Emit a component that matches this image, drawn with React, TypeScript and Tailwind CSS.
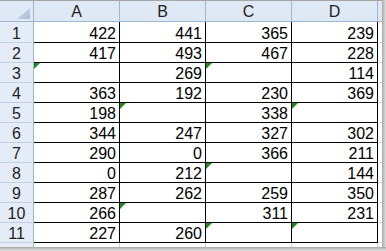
import React from "react";

type V = number | null;

const data: V[][] = [
  [422, 441, 365, 239],
  [417, 493, 467, 228],
  [null, 269, null, 114],
  [363, 192, 230, 369],
  [198, null, 338, null],
  [344, 247, 327, 302],
  [290, 0, 366, 211],
  [0, 212, null, 144],
  [287, 262, 259, 350],
  [266, null, 311, 231],
  [227, 260, null, null],
];

const cols = ["A", "B", "C", "D"];

function Flag() {
  return (
    <svg
      className="absolute left-0 top-0"
      width="6"
      height="6"
      viewBox="0 0 6 6"
    >
      <polygon points="0,0 6,0 0,6" fill="#1f8a1f" />
    </svg>
  );
}

function Row({ n, values, h }: { n: number; values: (V | undefined)[]; h: string }) {
  return (
    <div className={`grid grid-cols-[34px_86px_86px_86px_86px_1fr] shrink-0 ${h}`}>
      <div className="bg-[#e4ecf7] border-r border-b border-r-[#9eb6ce] border-b-[#c2d0e2] flex items-end justify-center text-[#222]">
        {n}
      </div>
      {values.map((v, i) =>
        v === undefined ? (
          <div key={i} className="border-r border-b border-[#d0d7e5]" />
        ) : (
          <div
            key={i}
            className="relative border-r border-b border-black flex items-end justify-end pr-[3px] text-black"
          >
            {v === null ? <Flag /> : v}
          </div>
        )
      )}
      <div className="border-b border-[#d0d7e5]" />
    </div>
  );
}

export default function App() {
  return (
    <div className="w-[386px] h-[251px] bg-white flex flex-col overflow-hidden font-['Liberation_Sans',Arial,sans-serif] text-[16px] leading-[17px]">
      <div className="flex flex-1 min-h-0">
        <div className="w-[382px] flex flex-col border-t border-[#a6a6a6] overflow-hidden">
          <div className="grid grid-cols-[34px_86px_86px_86px_86px_1fr] h-[21px] shrink-0 bg-[#dfe8f5]">
            <div className="relative border-r border-b border-[#9eb6ce] flex items-end justify-end pr-[3px] pb-[2px]">
              <svg width="13" height="11" viewBox="0 0 13 11">
                <defs>
                  <linearGradient id="cg" x1="0" y1="0" x2="1" y2="1">
                    <stop offset="0" stopColor="#d2dcea" />
                    <stop offset="1" stopColor="#a9bbd2" />
                  </linearGradient>
                </defs>
                <polygon points="13,0 13,11 0,11" fill="url(#cg)" />
              </svg>
            </div>
            {cols.map((c) => (
              <div
                key={c}
                className="border-r border-b border-[#9eb6ce] flex items-end justify-center pb-[1px] text-[#222]"
              >
                {c}
              </div>
            ))}
            <div className="border-b border-[#9eb6ce]" />
          </div>
          {data.map((r, i) => (
            <Row key={i} n={i + 1} values={r} h={i === 0 ? "h-[21px]" : "h-[20px]"} />
          ))}
          <Row n={12} values={[undefined, undefined, undefined, undefined]} h="h-[20px]" />
        </div>
        <div className="w-[4px] bg-linear-to-r from-[#a8a8a8] to-[#e2e2e2]" />
      </div>
      <div className="h-[4px] shrink-0 bg-linear-to-b from-[#a8a8a8] to-[#e2e2e2]" />
    </div>
  );
}
